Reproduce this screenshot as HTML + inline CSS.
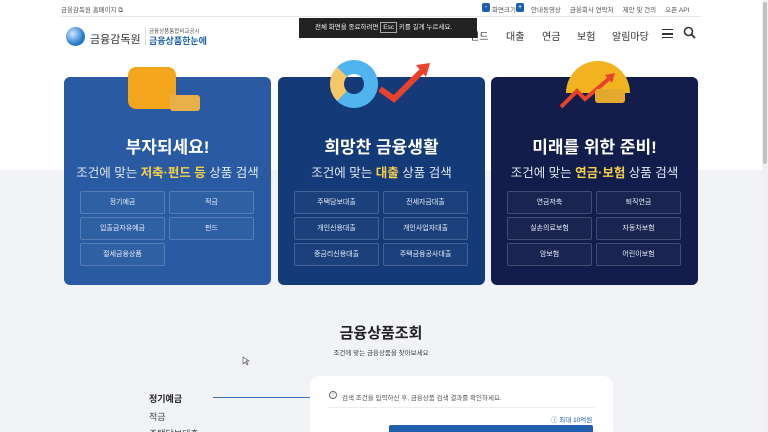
<!DOCTYPE html>
<html style="width:768px;height:432px;overflow:hidden"><head><meta charset="utf-8"><style>
*{margin:0;padding:0;box-sizing:border-box}
body{width:768px;height:432px;overflow:hidden;position:relative;background:#f1f3f7;font-family:"Liberation Sans","Noto Sans CJK KR",sans-serif;color:#333}
.top{position:absolute;left:0;top:0;width:762px;height:170px;background:#fff}
.abs{position:absolute;white-space:nowrap}
.card{position:absolute;top:77px;width:207px;height:208px;border-radius:6px;text-align:center;color:#fff}
.card h2{position:absolute;top:56px;width:100%;font-size:17px;font-weight:bold}
.card p{position:absolute;top:85px;width:100%;font-size:12.5px;color:#dfe6f2}
.card p b{color:#f7d04a}
.btn{position:absolute;width:85px;height:23px;border:1px solid rgba(255,255,255,.18);border-radius:2px;font-size:7px;line-height:21px;color:#e8eef8;background:rgba(255,255,255,.03)}
.nav span{position:absolute;top:28px;font-size:10px;color:#333}
</style></head><body>
<div class="top"></div>
<div class="abs" style="left:61px;top:4px;font-size:6.5px;color:#555">금융감독원 홈페이지 ⧉</div>
<div class="abs" style="left:482px;top:3px;width:8px;height:9px;background:#1f5fad;border-radius:2px;color:#fff;font-size:7px;line-height:9px;text-align:center">-</div>
<div class="abs" style="left:492px;top:4px;font-size:6.5px;color:#555">화면크기</div>
<div class="abs" style="left:516px;top:3px;width:8px;height:9px;background:#1f5fad;border-radius:2px;color:#fff;font-size:7px;line-height:9px;text-align:center">+</div>
<div class="abs" style="left:531px;top:4px;font-size:6.5px;color:#555">안내동영상 &nbsp;&nbsp;&nbsp; 금융회사 연락처 &nbsp;&nbsp;&nbsp; 제안 및 건의 &nbsp;&nbsp;&nbsp; 오픈 API</div>
<div class="abs" style="left:61px;top:16px;width:640px;height:1px;background:#e5e7eb"></div>
<div class="abs" style="left:66px;top:27px;width:19px;height:19px;border-radius:50%;background:radial-gradient(circle at 35% 35%,#cfe6ff,#2b7fd0 60%,#1a4f9a)"></div>
<div class="abs" style="left:90px;top:31px;font-size:11px;color:#333">금융감독원</div>
<div class="abs" style="left:145px;top:27px;width:1px;height:18px;background:#ddd"></div>
<div class="abs" style="left:149px;top:27px;font-size:5.5px;color:#555">금융상품통합비교공시</div>
<div class="abs" style="left:149px;top:34px;font-size:9px;color:#1f5fad;font-weight:bold">금융상품한눈에</div>
<div class="nav"><span style="left:470px">펀드</span><span style="left:506px">대출</span><span style="left:542px">연금</span><span style="left:577px">보험</span><span style="left:612px">알림마당</span></div>
<div class="abs" style="left:662px;top:29px;width:11px;height:9px;border-top:1.5px solid #333;border-bottom:1.5px solid #333"></div>
<div class="abs" style="left:662px;top:33px;width:11px;height:1.5px;background:#333"></div>
<svg class="abs" style="left:683px;top:26px" width="13" height="13" viewBox="0 0 13 13"><circle cx="5.5" cy="5.5" r="4" fill="none" stroke="#333" stroke-width="1.6"/><path d="M8.5 8.5L12 12" stroke="#333" stroke-width="1.8"/></svg>
<div class="abs" style="left:299px;top:18px;width:178px;height:20px;background:#222;color:#eee;font-size:6.5px;line-height:20px;padding-left:16px">전체 화면을 종료하려면 <span style="border:1px solid #aaa;padding:1px 2px">Esc</span> 키를 길게 누르세요.</div>

<div class="card" style="left:64px;background:#2a5ba2">
<div class="abs" style="left:64px;top:-10px;width:48px;height:42px;background:#f3a51c;border-radius:8px"></div>
<div class="abs" style="left:106px;top:18px;width:30px;height:16px;background:#e9b04a;border-radius:3px"></div>
<h2>부자되세요!</h2><p>조건에 맞는 <b>저축·펀드 등</b> 상품 검색</p>
<div class="btn" style="left:16px;top:114px">정기예금</div><div class="btn" style="left:105px;top:114px">적금</div>
<div class="btn" style="left:16px;top:140px">입출금자유예금</div><div class="btn" style="left:105px;top:140px">펀드</div>
<div class="btn" style="left:16px;top:166px">절세금융상품</div>
</div>
<div class="card" style="left:278px;background:#143a78">
<div class="abs" style="left:52px;top:-17px;width:48px;height:48px;border-radius:50%;border:14px solid #52b4ee;border-left-color:#f5c766"></div>
<svg class="abs" style="left:98px;top:-14px" width="56" height="40"><path d="M4 26L18 36L48 6" stroke="#e8432a" stroke-width="6" fill="none"/><path d="M40 2L54 0L50 14Z" fill="#e8432a"/></svg>
<h2>희망찬 금융생활</h2><p>조건에 맞는 <b>대출</b> 상품 검색</p>
<div class="btn" style="left:16px;top:114px">주택담보대출</div><div class="btn" style="left:105px;top:114px">전세자금대출</div>
<div class="btn" style="left:16px;top:140px">개인신용대출</div><div class="btn" style="left:105px;top:140px">개인사업자대출</div>
<div class="btn" style="left:16px;top:166px">중금리신용대출</div><div class="btn" style="left:105px;top:166px">주택금융공사대출</div>
</div>
<div class="card" style="left:491px;background:#131d4c">
<div class="abs" style="left:75px;top:-16px;width:64px;height:32px;border-radius:32px 32px 0 0;background:#f2b320"></div>
<svg class="abs" style="left:68px;top:-4px" width="60" height="36"><path d="M2 34L18 18L26 26L52 4" stroke="#e8432a" stroke-width="4" fill="none"/><path d="M46 2L56 0L53 10Z" fill="#e8432a"/></svg>
<div class="abs" style="left:104px;top:12px;width:30px;height:14px;background:#e3a92c;border-radius:3px"></div>
<h2>미래를 위한 준비!</h2><p>조건에 맞는 <b>연금·보험</b> 상품 검색</p>
<div class="btn" style="left:16px;top:114px">연금저축</div><div class="btn" style="left:105px;top:114px">퇴직연금</div>
<div class="btn" style="left:16px;top:140px">실손의료보험</div><div class="btn" style="left:105px;top:140px">자동차보험</div>
<div class="btn" style="left:16px;top:166px">암보험</div><div class="btn" style="left:105px;top:166px">어린이보험</div>
</div>
<div class="abs" style="left:762px;top:0;width:6px;height:432px;background:#f1f1f1"></div>
<div class="abs" style="left:763px;top:2px;width:4px;height:162px;background:#c1c1c1;border-radius:2px"></div>

<div class="abs" style="left:0;top:322px;width:762px;text-align:center;font-size:15px;font-weight:bold;color:#222">금융상품조회</div>
<div class="abs" style="left:0;top:347px;width:762px;text-align:center;font-size:6.5px;color:#444">조건에 맞는 금융상품을 찾아보세요</div>
<div class="abs" style="left:149px;top:392px;font-size:9px;font-weight:bold;color:#222">정기예금</div>
<div class="abs" style="left:149px;top:410px;font-size:9px;color:#444">적금</div>
<div class="abs" style="left:149px;top:427px;font-size:9px;color:#444;height:5px;overflow:hidden">주택담보대출</div>
<div class="abs" style="left:213px;top:397px;width:104px;height:1px;background:#3a72b8"></div>
<div class="abs" style="left:310px;top:376px;width:303px;height:56px;background:#fff;border-radius:10px 10px 0 0"></div>
<div class="abs" style="left:329px;top:391px;width:8px;height:8px;border:1px solid #666;border-radius:50%;font-size:5px;line-height:6px;text-align:center;color:#666">i</div>
<div class="abs" style="left:342px;top:392px;font-size:6.5px;color:#555">검색 조건을 입력하신 후, 금융상품 검색 결과를 확인하세요.</div>
<div class="abs" style="left:328px;top:407px;width:267px;height:1px;background:#eee"></div>
<div class="abs" style="left:551px;top:414px;font-size:6.5px;color:#1f5fad">ⓘ 최대 10억원</div>
<div class="abs" style="left:389px;top:425px;width:204px;height:7px;background:#1f5fad;border-radius:2px 2px 0 0"></div>
<svg class="abs" style="left:242px;top:356px" width="8" height="10"><path d="M1 1L1 8L3 6L5 9L6 8L4 5L7 5Z" fill="#fff" stroke="#555" stroke-width=".7"/></svg>
</body></html>
